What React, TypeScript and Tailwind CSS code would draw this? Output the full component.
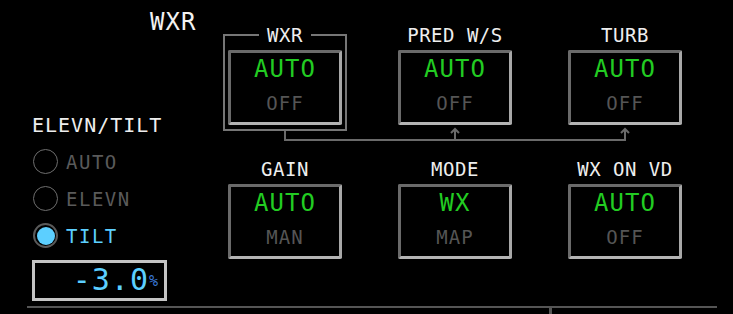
import React from "react";

const mono = "font-['DejaVu_Sans_Mono',monospace]";

function ModeButton({on, off}: {on: string; off: string}) {
    return <div
        className="flex h-[75px] w-[114px] flex-col items-center rounded-[2px] border-[3px] border-t-[#6a6a6a] border-l-[#6a6a6a] border-r-[#a8a8a8] border-b-[#b4b4b4] bg-black">
        <span className="mt-[2px] text-[24px] leading-[28px] tracking-[1px] text-[#22cc22]">{on}</span>
        <span className="mt-[8px] text-[19px] leading-[24px] tracking-[1px] text-[#555555]">{off}</span>
    </div>
}

function Labeled({label, on, off}: {label: string; on: string; off: string}) {
    return <div className="flex flex-col items-center">
        <span className="text-[19px] leading-[20px] tracking-[0.5px] text-[#eeeeee]">{label}</span>
        <div className="mt-[5px]">
            <ModeButton on={on} off={off}/>
        </div>
    </div>
}

function Radio({label, checked}: {label: string; checked?: boolean}) {
    return <div className="flex h-[37px] items-center gap-[8px]">
        <div
            className={checked
                ? "flex h-[25px] w-[25px] items-center justify-center rounded-full border-2 border-[#5a5a5a]"
                : "h-[25px] w-[25px] rounded-full border-[1.5px] border-[#6e6e6e]"}>
            {checked && <div className="h-[18px] w-[18px] rounded-full bg-[#5ccfff]"/>}
        </div>
        <span
            className={checked
                ? "text-[19px] leading-[24px] tracking-[1.5px] text-[#5ccfff]"
                : "text-[19px] leading-[24px] tracking-[1.5px] text-[#5a5a5a]"}>{label}</span>
    </div>
}

export default function App() {
    return <div className={`flex h-[314px] w-[733px] flex-col overflow-hidden bg-black ${mono}`}>
        <div className="flex">
            {/* left column */}
            <div className="flex w-[200px] flex-col">
                <span className="mt-[9px] pl-[150px] text-[24px] leading-[26px] tracking-[1px] text-[#f2f2f2]">WXR</span>
                <span className="mt-[78px] pl-[32px] text-[20px] leading-[24px] tracking-[1px] text-[#eeeeee]">ELEVN/TILT</span>
                <div className="mt-[6px] flex flex-col pl-[33px]">
                    <Radio label="AUTO"/>
                    <Radio label="ELEVN"/>
                    <Radio label="TILT" checked/>
                </div>
                <div
                    className="ml-[32px] mt-[6px] flex h-[41px] w-[135px] items-end justify-end border-[3px] border-[#c4c4c4] pb-[1px] pr-[6px]">
                    <span className="text-[30px] leading-[34px] tracking-[1px] text-[#5ccfff]">-3.0</span>
                    <span className="mb-[7px] text-[15px] leading-[18px] text-[#3b78d8]">%</span>
                </div>
            </div>

            {/* right column */}
            <div className="flex flex-col pt-[25px]">
                <div className="grid grid-cols-[170px_170px_170px] items-start">
                    <div className="flex justify-center">
                        <fieldset className="w-[124px] border-2 border-[#767676] px-[3px] pb-[4px]">
                            <legend
                                className="mx-auto px-[8px] text-[19px] leading-[20px] tracking-[0.5px] text-[#eeeeee]">WXR</legend>
                            <div className="mt-[5px] flex justify-center">
                                <ModeButton on="AUTO" off="OFF"/>
                            </div>
                        </fieldset>
                    </div>
                    <Labeled label="PRED W/S" on="AUTO" off="OFF"/>
                    <Labeled label="TURB" on="AUTO" off="OFF"/>
                </div>

                <svg width="510" height="22" viewBox="0 0 510 22" className="-mt-[6px]" fill="none"
                     stroke="#6a6a6a" strokeWidth="2">
                    <path d="M85 6 V15 H426"/>
                    <path d="M255 15 V4 M251 8 L255 4 L259 8"/>
                    <path d="M425 15 V4 M421 8 L425 4 L429 8"/>
                </svg>

                <div className="mt-[12px] grid grid-cols-[170px_170px_170px]">
                    <Labeled label="GAIN" on="AUTO" off="MAN"/>
                    <Labeled label="MODE" on="WX" off="MAP"/>
                    <Labeled label="WX ON VD" on="AUTO" off="OFF"/>
                </div>
            </div>
        </div>

        <div className="ml-[27px] mt-[5px] h-[2px] w-[690px] bg-[#555555]"/>
        <div className="ml-[549px] h-[7px] w-[3px] bg-[#555555]"/>
    </div>
}
